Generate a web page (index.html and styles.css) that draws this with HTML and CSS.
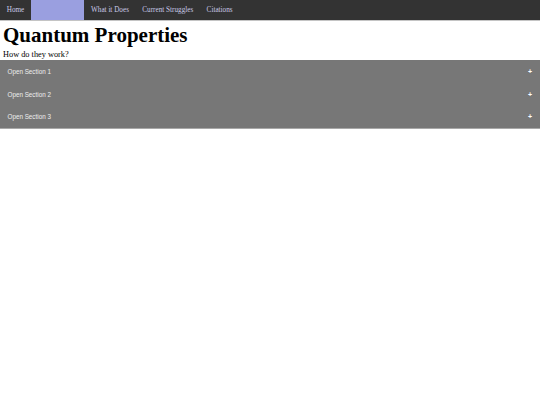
FILE: index.html
```html
<!DOCTYPE html>
<html>
<head>
<meta charset="utf-8">
<link rel="stylesheet" href="styles.css">
</head>
<body>
<nav class="topnav">
  <a class="nav-link" href="#">Home</a>
  <a class="nav-link active" href="#"></a>
  <a class="nav-link" href="#">What it Does</a>
  <a class="nav-link" href="#">Current Struggles</a>
  <a class="nav-link" href="#">Citations</a>
</nav>
<h1 class="title">Quantum Properties</h1>
<p class="subtitle">How do they work?</p>
<div class="accordion">
  <button class="acc-btn">Open Section 1</button>
  <button class="acc-btn">Open Section 2</button>
  <button class="acc-btn">Open Section 3</button>
</div>
</body>
</html>
```
FILE: styles.css
```css
html, body {
  margin: 0;
  padding: 0;
  background: #fff;
}
body {
  font-family: "Liberation Serif", "Times New Roman", serif;
}
.topnav {
  display: flex;
  height: 20px;
  background: #333333;
  border-bottom: 1px solid #c4c4c4;
}
.nav-link {
  display: flex;
  align-items: center;
  padding: 0 6.7px;
  font-size: 7.2px;
  color: #c9c9e6;
  text-decoration: none;
}
.nav-link.active {
  width: 40px;
  background: #9a9fe0;
}
.title {
  margin: 0;
  padding-left: 3px;
  font-size: 21px;
  line-height: 28px;
  font-weight: bold;
  color: #000;
}
.subtitle {
  margin: 0;
  padding-left: 3px;
  font-size: 8.3px;
  line-height: 11px;
  color: #000;
}
.accordion {
  display: flex;
  flex-direction: column;
  background: #777777;
  border-bottom: 1px solid #a8a8a8;
}
.acc-btn {
  display: flex;
  justify-content: space-between;
  align-items: center;
  height: 22.5px;
  padding: 1px 8px 0 7.5px;
  border: none;
  background: #777777;
  color: #eeeeee;
  font-family: "Liberation Sans", Arial, sans-serif;
  font-size: 6.3px;
  text-align: left;
}
.acc-btn::after {
  content: "+";
  font-weight: bold;
  font-size: 7px;
  color: #fff;
}
```
